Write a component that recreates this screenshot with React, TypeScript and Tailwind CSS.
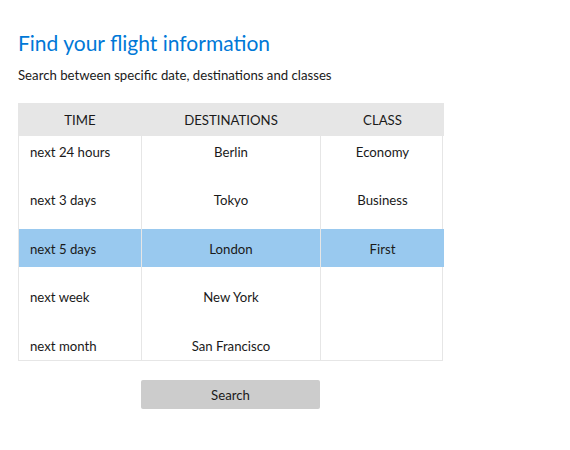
const times = ["next 24 hours", "next 3 days", "next 5 days", "next week", "next month"];
const destinations = ["Berlin", "Tokyo", "London", "New York", "San Francisco"];
const classes = ["Economy", "Business", "First"];

const SELECTED = 2;

function Column({
  title,
  items,
  align,
  last,
}: {
  title: string;
  items: string[];
  align: "left" | "center";
  last?: boolean;
}) {
  return (
    <div className={`flex flex-col ${last ? "" : "border-r border-[#e6e6e6]"}`}>
      <div className="flex h-[33px] items-center justify-center bg-[#e6e6e6] pt-[3px] text-[13.2px] text-[#1a1a1a]">
        {title}
      </div>
      <div className="h-[224px] overflow-hidden">
        <ul className="-mt-[4px] flex flex-col gap-[10.5px]">
          {items.map((item, i) => (
            <li
              key={item}
              className={`flex h-[38px] items-center pt-[3px] text-[13.2px] text-[#1a1a1a] ${
                align === "left" ? "pl-[11px]" : "justify-center"
              } ${i === SELECTED ? "bg-[#99c9ef]" : ""}`}
            >
              {item}
            </li>
          ))}
        </ul>
      </div>
    </div>
  );
}

export default function App() {
  return (
    <div className="min-h-[450px] w-[570px] bg-white px-[18px] pt-[29px] font-['Lato',sans-serif]">
      <h1 className="text-[21px] leading-[28px] text-[#0078d7]">Find your flight information</h1>
      <p className="mt-[9px] text-[13.2px] leading-[18px] text-[#1a1a1a]">
        Search between specific date, destinations and classes
      </p>

      <div className="mt-[19px] grid w-[425px] grid-cols-[123px_179px_123px] border-x border-b border-[#e6e6e6]">
        <Column title="TIME" items={times} align="left" />
        <Column title="DESTINATIONS" items={destinations} align="center" />
        <Column title="CLASS" items={classes} align="center" last />
      </div>

      <div className="mt-[19px] pl-[123px]">
        <button className="h-[29px] w-[179px] rounded-[2px] bg-[#cccccc] pt-[2px] text-[13.2px] text-[#1a1a1a]">
          Search
        </button>
      </div>
    </div>
  );
}
